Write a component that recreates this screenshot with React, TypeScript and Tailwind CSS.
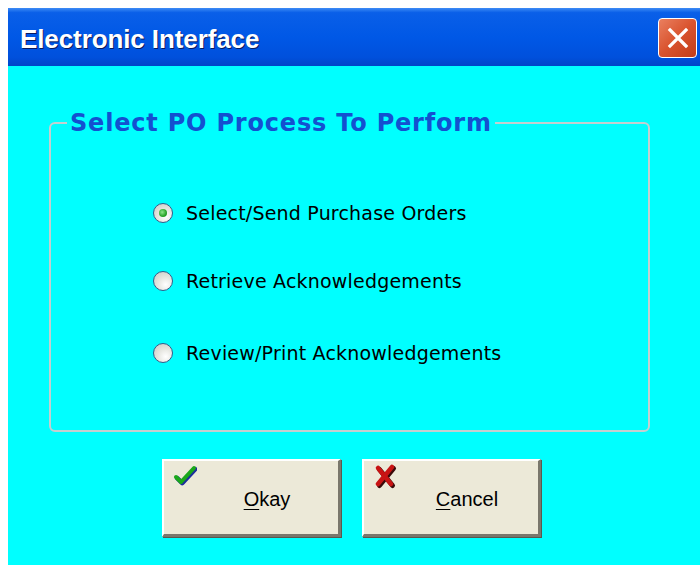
import React from "react";

const OPTIONS = [
  { id: "send", label: "Select/Send Purchase Orders", mt: "mt-[64px]" },
  { id: "retrieve", label: "Retrieve Acknowledgements", mt: "mt-[44px]" },
  { id: "review", label: "Review/Print Acknowledgements", mt: "mt-[48px]" },
];

function Radio({ checked }: { checked: boolean }) {
  return (
    <span className="relative flex h-[20px] w-[20px] shrink-0 items-center justify-center rounded-full border-[1.5px] border-[#385a88] bg-[radial-gradient(circle_at_65%_70%,#ffffff_0%,#e6e6e0_45%,#c8c8c0_100%)]">
      {checked && (
        <span className="h-[8px] w-[8px] rounded-full bg-[radial-gradient(circle_at_40%_40%,#8ee68a_0%,#28a428_60%,#1a8a1a_100%)]" />
      )}
    </span>
  );
}

function CheckIcon() {
  return (
    <svg width="24" height="24" viewBox="0 0 24 24">
      <path d="M3 13 L8 18 L21 4" fill="none" stroke="#1c2e9c" strokeWidth="4.5" strokeLinecap="round" strokeLinejoin="round" transform="translate(1.2 1.2)" />
      <path d="M3 13 L8 18 L21 4" fill="none" stroke="#1aa81a" strokeWidth="4" strokeLinecap="round" strokeLinejoin="round" />
    </svg>
  );
}

function CrossIcon() {
  return (
    <svg width="26" height="26" viewBox="0 0 26 26">
      <g transform="translate(1.5 1.5)" stroke="#3a0a0a" strokeWidth="5" strokeLinecap="round">
        <path d="M5 4 L18 20" />
        <path d="M19 3 L5 20" />
      </g>
      <g stroke="#c81414" strokeWidth="4.5" strokeLinecap="round">
        <path d="M5 4 L18 20" />
        <path d="M19 3 L5 20" />
      </g>
    </svg>
  );
}

function DialogButton({ icon, hotkey, rest }: { icon: React.ReactNode; hotkey: string; rest: string }) {
  return (
    <button
      type="button"
      className="relative flex h-[78px] w-[179px] items-center justify-center border-t-2 border-l-2 border-t-white border-l-white border-r-[3px] border-b-[3px] border-r-[#7a776c] border-b-[#7a776c] bg-[#ece9d8] pl-[32px] pt-[2px] text-[20px] text-black shadow-[1px_1px_0_#5a584f]"
    >
      <span className="absolute left-[9px] top-[3px]">{icon}</span>
      <span>
        <span className="underline decoration-1 underline-offset-[3px]">{hotkey}</span>
        {rest}
      </span>
    </button>
  );
}

export default function App() {
  return (
    <div className="h-[565px] w-[700px] overflow-hidden bg-white pl-[8px] pt-[8px] font-['Liberation_Sans',Arial,sans-serif]">
      <div className="flex h-full flex-col bg-[#00ffff]">
        {/* title bar */}
        <div className="flex h-[58px] shrink-0 items-center justify-between bg-[linear-gradient(to_bottom,#3d8bf5_0%,#0a5fe8_8%,#0058e6_50%,#0050dc_85%,#0046c8_100%)] pl-[12px] pr-[3px]">
          <span className="pt-[4px] text-[26px] font-bold tracking-[-0.1px] text-white [text-shadow:1px_1px_0_#0a1a60]">
            Electronic Interface
          </span>
          <span className="mt-[2px] flex h-[40px] w-[39px] items-center justify-center rounded-[4px] border-[1.5px] border-white bg-[linear-gradient(135deg,#ea8060_0%,#d9532e_50%,#c23c1a_100%)]">
            <svg width="22" height="22" viewBox="0 0 22 22">
              <path d="M3 3 L19 19 M19 3 L3 19" stroke="white" strokeWidth="3.2" strokeLinecap="square" />
            </svg>
          </span>
        </div>

        {/* process group */}
        <fieldset className="ml-[41px] mt-[43px] h-[323px] w-[601px] rounded-[6px] border-2 border-[#c4cfd0] px-0 pb-0 pt-0">
          <legend className="ml-[16px] px-[3px] font-['DejaVu_Sans',sans-serif] text-[24px] font-bold leading-[28px] tracking-[0.8px] text-[#1450d0]">
            Select PO Process To Perform
          </legend>
          <div className="flex flex-col pl-[102px]">
            {OPTIONS.map((o, i) => (
              <label key={o.id} className={`flex items-center gap-[13px] ${o.mt}`}>
                <Radio checked={i === 0} />
                <span className="font-['DejaVu_Sans',sans-serif] text-[19px] leading-[24px] tracking-[0.2px] text-black">{o.label}</span>
              </label>
            ))}
          </div>
        </fieldset>

        <div className="ml-[154px] mt-[27px] flex gap-[21px]">
          <DialogButton icon={<CheckIcon />} hotkey="O" rest="kay" />
          <DialogButton icon={<CrossIcon />} hotkey="C" rest="ancel" />
        </div>
      </div>
    </div>
  );
}
